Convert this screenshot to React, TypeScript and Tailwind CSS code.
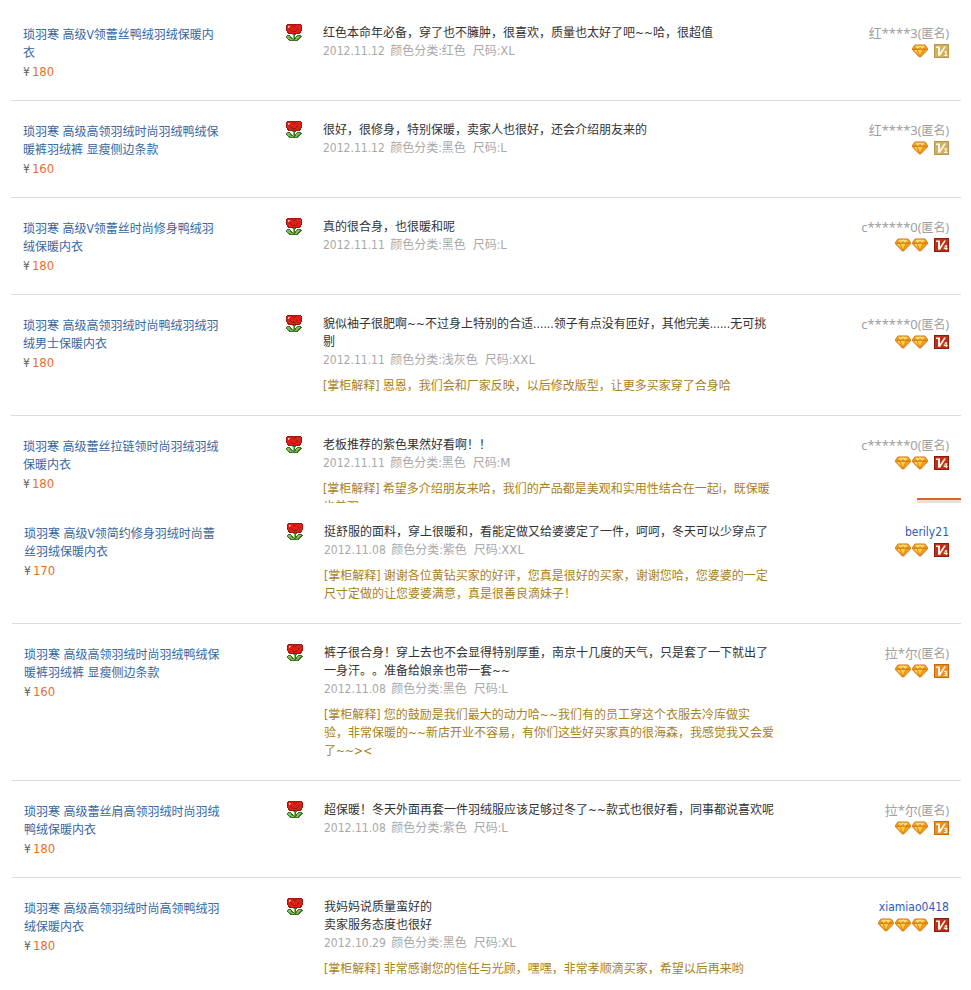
import React from 'react';

interface Review {
  id: number;
  title: string;
  price: number;
  comment: string;
  date: string;
  color: string;
  size: string;
  reply?: string;
  user: string;
  anonymous: boolean;
  diamonds: number;
  level: 1 | 3 | 4;
}

const firstPage: Review[] = [
  {
    id: 1,
    title: '琐羽寒 高级V领蕾丝鸭绒羽绒保暖内\n衣',
    price: 180,
    comment: '红色本命年必备，穿了也不臃肿，很喜欢，质量也太好了吧~~哈，很超值',
    date: '2012.11.12',
    color: '红色',
    size: 'XL',
    user: '红****3',
    anonymous: true,
    diamonds: 1,
    level: 1,
  },
  {
    id: 2,
    title: '琐羽寒 高级高领羽绒时尚羽绒鸭绒保\n暖裤羽绒裤 显瘦侧边条款',
    price: 160,
    comment: '很好，很修身，特别保暖，卖家人也很好，还会介绍朋友来的',
    date: '2012.11.12',
    color: '黑色',
    size: 'L',
    user: '红****3',
    anonymous: true,
    diamonds: 1,
    level: 1,
  },
  {
    id: 3,
    title: '琐羽寒 高级V领蕾丝时尚修身鸭绒羽\n绒保暖内衣',
    price: 180,
    comment: '真的很合身，也很暖和呢',
    date: '2012.11.11',
    color: '黑色',
    size: 'L',
    user: 'c******0',
    anonymous: true,
    diamonds: 2,
    level: 4,
  },
  {
    id: 4,
    title: '琐羽寒 高级高领羽绒时尚鸭绒羽绒羽\n绒男士保暖内衣',
    price: 180,
    comment: '貌似袖子很肥啊~~不过身上特别的合适......领子有点没有匝好，其他完美......无可挑\n剔',
    date: '2012.11.11',
    color: '浅灰色',
    size: 'XXL',
    reply: '恩恩，我们会和厂家反映，以后修改版型，让更多买家穿了合身哈',
    user: 'c******0',
    anonymous: true,
    diamonds: 2,
    level: 4,
  },
  {
    id: 5,
    title: '琐羽寒 高级蕾丝拉链领时尚羽绒羽绒\n保暖内衣',
    price: 180,
    comment: '老板推荐的紫色果然好看啊！！',
    date: '2012.11.11',
    color: '黑色',
    size: 'M',
    reply: '希望多介绍朋友来哈，我们的产品都是美观和实用性结合在一起i，既保暖\n也美观',
    user: 'c******0',
    anonymous: true,
    diamonds: 2,
    level: 4,
  },
];

const secondPage: Review[] = [
  {
    id: 6,
    title: '琐羽寒 高级V领简约修身羽绒时尚蕾\n丝羽绒保暖内衣',
    price: 170,
    comment: '挺舒服的面料，穿上很暖和，看能定做又给婆婆定了一件，呵呵，冬天可以少穿点了',
    date: '2012.11.08',
    color: '紫色',
    size: 'XXL',
    reply: '谢谢各位黄钻买家的好评，您真是很好的买家，谢谢您哈，您婆婆的一定\n尺寸定做的让您婆婆满意，真是很善良滴妹子！',
    user: 'berily21',
    anonymous: false,
    diamonds: 2,
    level: 4,
  },
  {
    id: 7,
    title: '琐羽寒 高级高领羽绒时尚羽绒鸭绒保\n暖裤羽绒裤 显瘦侧边条款',
    price: 160,
    comment: '裤子很合身！穿上去也不会显得特别厚重，南京十几度的天气，只是套了一下就出了\n一身汗。。准备给娘亲也带一套~~',
    date: '2012.11.08',
    color: '黑色',
    size: 'L',
    reply: '您的鼓励是我们最大的动力哈~~我们有的员工穿这个衣服去冷库做实\n验，非常保暖的~~新店开业不容易，有你们这些好买家真的很海森，我感觉我又会爱\n了~~><',
    user: '拉*尔',
    anonymous: true,
    diamonds: 2,
    level: 3,
  },
  {
    id: 8,
    title: '琐羽寒 高级蕾丝肩高领羽绒时尚羽绒\n鸭绒保暖内衣',
    price: 180,
    comment: '超保暖！冬天外面再套一件羽绒服应该足够过冬了~~款式也很好看，同事都说喜欢呢',
    date: '2012.11.08',
    color: '紫色',
    size: 'L',
    user: '拉*尔',
    anonymous: true,
    diamonds: 2,
    level: 3,
  },
  {
    id: 9,
    title: '琐羽寒 高级高领羽绒时尚高领鸭绒羽\n绒保暖内衣',
    price: 180,
    comment: '我妈妈说质量蛮好的\n卖家服务态度也很好',
    date: '2012.10.29',
    color: '黑色',
    size: 'XL',
    reply: '非常感谢您的信任与光顾，嘿嘿，非常孝顺滴买家，希望以后再来哟',
    user: 'xiamiao0418',
    anonymous: false,
    diamonds: 3,
    level: 4,
  },
];

const flowerPixels = [
  '.DDDDDDDDDDDDDD.',
  'DRRRRRDRRDRRRRRD',
  'DRWWRRRDDRRRRRRD',
  'DRWRRRRRRRRRRRRD',
  'DRRRRRRRRRRDRRRD',
  'DRRRDRRRRRRDRRRD',
  'DRRRRDRRRRDRRRRD',
  '.DRRRRDDDDRRRRD.',
  '.DDRRRRRRRRRRDD.',
  '..DDDDDDDDDDDD..',
  '......gGGG......',
  '.GGG...gG..GGGG.',
  'GgggG..gG.GgggGG',
  'GgggGG.gGGgggGG.',
  '.GgggGGgGGggGG..',
  '..GGgggGGggGG...',
  '...GGGGGGGGG....',
];

const flowerColors: Record<string, string> = {
  D: '#a3160f',
  R: '#dc1f17',
  W: '#f9b9a8',
  G: '#3c7526',
  g: '#83b95a',
};

const levelColors = {
  1: { edge: '#b8954a', fill: '#d0b066' },
  3: { edge: '#c8690c', fill: '#ec8d20' },
  4: { edge: '#8e1b0d', fill: '#c03018' },
};

function Flower() {
  return (
    <svg className="block h-[17px] w-4" viewBox="0 0 16 17" shapeRendering="crispEdges" role="img" aria-label="好评">
      {flowerPixels.map((row, y) =>
        row.split('').map((c, x) =>
          c === '.' ? null : <rect key={`${x}-${y}`} x={x} y={y} width="1" height="1" fill={flowerColors[c]} />
        )
      )}
    </svg>
  );
}

function Diamond() {
  return (
    <svg className="block h-[14px] w-4" viewBox="0 0 16 14" aria-hidden="true">
      <path d="M3 1h10l2.5 3.5v1.3L8.6 13H7.4L.5 5.8V4.5z" fill="#f6a01c" stroke="#d0720f" strokeWidth="1" strokeLinejoin="round" />
      <path d="M3.6 1.8 5.8 4.6 8 1.8l2.2 2.8 2.2-2.8" fill="#ffd95a" stroke="#fff0a0" strokeWidth=".8" />
      <path d="M1.5 5.2h13" stroke="#b85c0c" strokeWidth=".8" />
      <path d="M5.2 5.8h5.6L8 12z" fill="#ffcf3d" />
      <path d="M4.9 5.5 8 12.4l3.1-6.9" fill="none" stroke="#d9800f" strokeWidth=".7" />
      <path d="m2.4 6.1 3.4 3.6-1.4-3.6z" fill="#ffe680" />
    </svg>
  );
}

function LevelBadge({ level }: { level: Review['level'] }) {
  const { edge, fill } = levelColors[level];
  return (
    <svg className="block h-[14px] w-[15px]" viewBox="0 0 15 14" role="img" aria-label={`V${level}`}>
      <rect x=".5" y=".5" width="14" height="13" fill={fill} stroke={edge} />
      <path d="M2 2.5h4v6l4.2-6H12L6.2 11.8H4V4H2z" fill="#fff6e4" />
      <text x="9.6" y="12.4" fill="#fff6e4" fontSize="7" fontWeight="700" fontFamily="DejaVu Sans Condensed, sans-serif">
        {level}
      </text>
    </svg>
  );
}

function ReviewRow({ review, clipped = false }: { review: Review; clipped?: boolean }) {
  return (
    <li
      className={`flex items-start ${clipped
        ? 'pt-5'
        : 'border-b border-[#dcdcdc] py-5 last:border-b-0'
        }`}
    >
      <div className="-mb-0.5 w-[275px] shrink-0 pl-3 pt-0.5">
        <a href="#item" className="block whitespace-pre-line leading-[18px] text-[#36679f] hover:underline">
          {review.title}
        </a>
        <p className="text-[13px] leading-5 text-[#e4702d]">
          <span className="mr-0.5 text-xs text-[#666]">¥</span>
          {review.price}
        </p>
      </div>

      <div className="w-[37px] shrink-0">
        <Flower />
      </div>

      <div className="w-[464px] leading-[18px]">
        <p className="whitespace-pre-line text-[#333]">{review.comment}</p>
        <p className="h-[18px] whitespace-pre text-[#a9a9a9]">
          <span className="mr-0.5">{review.date}</span>
          {` 颜色分类:${review.color}  尺码:`}
          <span className="text-[13px]">{review.size}</span>
        </p>
        {review.reply && (
          <p className={`mt-2 whitespace-pre-line text-[#a8801c] ${clipped ? 'h-[23px] overflow-hidden' : ''}`}>
            {`[掌柜解释] ${review.reply}`}
          </p>
        )}
      </div>

      <div className="ml-auto shrink-0 pr-3 text-right leading-[18px]">
        {review.anonymous ? (
          <p className="h-[18px] font-['Noto_Sans','Noto_Sans_CJK_SC',sans-serif] text-[#a0a0a0]">
            <span className="text-[13px]">{review.user}</span>(匿名)
          </p>
        ) : (
          <a href="#user" className="block h-[18px] text-[#2f5bb7] hover:underline">{review.user}</a>
        )}
        <div className="flex h-[18px] items-center justify-end">
          <div className="mr-1.5 flex gap-px">
            {Array.from({ length: review.diamonds }, (_, i) => (
              <Diamond key={i} />
            ))}
          </div>
          <LevelBadge level={review.level} />
        </div>
      </div>
    </li>
  );
}

export default function App() {
  return (
    <main className="min-h-screen bg-white pr-2.5 pt-1 font-['DejaVu_Sans_Condensed','Noto_Sans_CJK_SC',sans-serif] text-xs [text-spacing-trim:space-all]">
      <section className="relative pl-[11px]">
        <ul>
          {firstPage.map((review, index) => (
            <ReviewRow key={review.id} review={review} clipped={index === firstPage.length - 1} />
          ))}
        </ul>
        {/* Top edge of the pager button */}
        <div className="absolute bottom-0 right-0 h-[5px] w-11 border-t-2 border-[#d4692c] bg-[#ecdfd8]" />
      </section>

      <section className="pl-3">
        <ul>
          {secondPage.map((review) => (
            <ReviewRow key={review.id} review={review} />
          ))}
        </ul>
      </section>
    </main>
  );
}
